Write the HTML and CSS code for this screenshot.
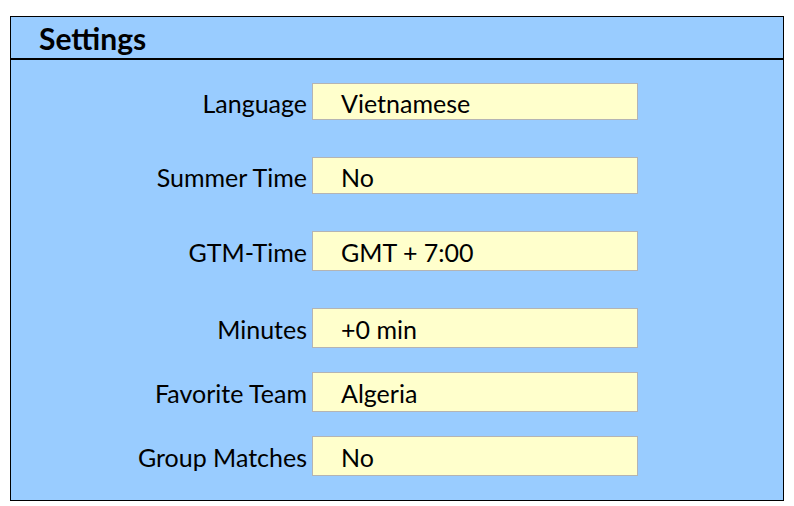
FILE: index.html
```html
<!DOCTYPE html>
<html lang="en">

<head>
    <meta charset="UTF-8">
    <title>Settings</title>
    <link rel="stylesheet" href="styles.css">
</head>

<body>
    <div class="panel">
        <div class="panel-head">
            <h1>Settings</h1>
        </div>
        <div class="form">
            <div class="row short">
                <span class="label">Language</span>
                <div class="field">Vietnamese</div>
            </div>
            <div class="row short">
                <span class="label">Summer Time</span>
                <div class="field">No</div>
            </div>
            <div class="row">
                <span class="label">GTM-Time</span>
                <div class="field">GMT + 7:00</div>
            </div>
            <div class="row">
                <span class="label">Minutes</span>
                <div class="field">+0 min</div>
            </div>
            <div class="row tight">
                <span class="label">Favorite Team</span>
                <div class="field">Algeria</div>
            </div>
            <div class="row tight">
                <span class="label">Group Matches</span>
                <div class="field">No</div>
            </div>
        </div>
    </div>
</body>

</html>
```

FILE: styles.css
```css
/* General styles */
body {
    margin: 0;
    padding: 16px 0 0 10px;
    background-color: #ffffff;
    font-family: Lato, "Liberation Sans", sans-serif;
    color: #000;
}

.panel {
    width: 772px;
    height: 483px;
    border: 1px solid #000;
    background-color: #99ccff;
}

.panel-head {
    height: 41px;
    border-bottom: 2px solid #000;
    display: flex;
    align-items: center;
    padding-left: 28px;
}

.panel-head h1 {
    margin: 0;
    font-size: 30px;
    font-weight: bold;
}

/* Form rows */
.form {
    display: flex;
    flex-direction: column;
    padding-top: 23px;
}

.row {
    display: flex;
    align-items: stretch;
    height: 40px;
    margin-bottom: 37px;
}

.row.short {
    height: 37px;
}

.row.tight {
    margin-top: -13px;
}

.label {
    width: 296px;
    margin-right: 5px;
    text-align: right;
    font-size: 25px;
    display: flex;
    align-items: center;
    justify-content: flex-end;
    padding-top: 2px;
}

.field {
    width: 296px;
    padding-left: 28px;
    padding-top: 2px;
    border: 1px solid #b4b4b4;
    background-color: #ffffcc;
    font-size: 25px;
    display: flex;
    align-items: center;
}
```
